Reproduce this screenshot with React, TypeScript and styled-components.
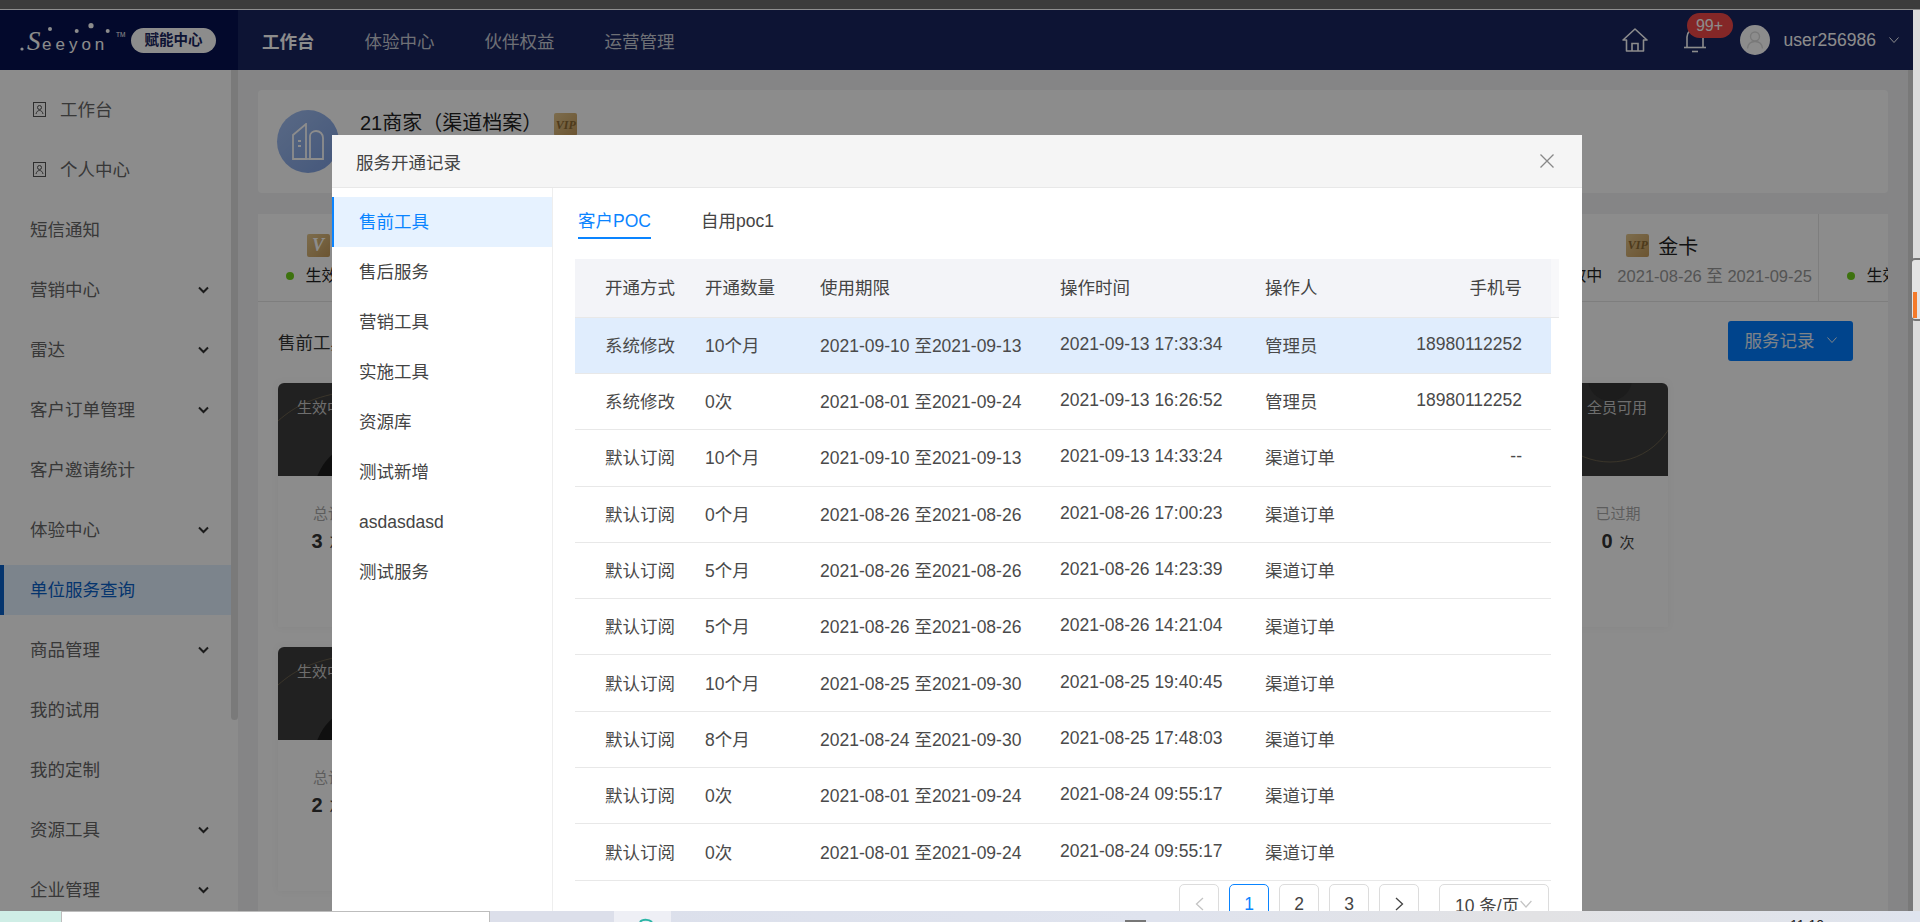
import React from "react";
import styled, { createGlobalStyle } from "styled-components";

const GlobalStyle = createGlobalStyle`
  html, body {
    margin: 0;
    padding: 0;
    background: #fff;
  }
  * {
    box-sizing: border-box;
  }
  body {
    font-family: "Liberation Sans", "Noto Sans CJK SC", sans-serif;
    font-size: 17.5px;
    color: #333;
  }
`;

const Screen = styled.div`
  width: 1920px;
  height: 922px;
  display: flex;
  flex-direction: column;
  overflow: hidden;
`;

const TitleStrip = styled.div`
  height: 10px;
  flex: none;
  background: #3c3c3c;
  border-bottom: 1px solid #8f8f8f;
`;

const Shell = styled.div`
  flex: 1;
  min-height: 0;
  display: flex;
`;

const Page = styled.div`
  position: relative;
  flex: 1;
  min-width: 0;
  display: flex;
  flex-direction: column;
  overflow: hidden;
`;

const WindowScroll = styled.div`
  position: relative;
  width: 7px;
  flex: none;
  background: #dcdcdc;
`;

const ScrollThumb = styled.div`
  position: absolute;
  top: 248px;
  left: -3px;
  width: 10px;
  height: 63px;
  border: 2px solid #777;
  border-right: 0;
  border-radius: 5px 0 0 5px;
  background: #e4e4e4;
  padding: 32px 3px 1px 1px;
`;

const ScrollMark = styled.div`
  height: 100%;
  background: #f47a2a;
`;

const Header = styled.header`
  height: 60px;
  flex: none;
  display: flex;
  align-items: center;
  background: #182560;
  color: #fff;
`;

const Brand = styled.div`
  width: 238px;
  height: 100%;
  flex: none;
  display: flex;
  align-items: center;
  gap: 4px;
  padding-left: 19px;
  background: #061250;
`;

const BrandPill = styled.span`
  display: block;
  width: 85px;
  height: 25px;
  line-height: 25px;
  text-align: center;
  border-radius: 13px;
  background: #fff;
  color: #182560;
  font-size: 14.5px;
  font-weight: 700;
`;

const TopNav = styled.nav`
  display: flex;
  gap: 50px;
  padding-left: 24px;
`;

const TopLink = styled.a<{ $active?: boolean }>`
  color: ${(p) => (p.$active ? "#fff" : "#c9ccd6")};
  font-weight: ${(p) => (p.$active ? 700 : 400)};
`;

const HeaderRight = styled.div`
  margin-left: auto;
  display: flex;
  align-items: center;
  padding-right: 14px;
`;

const BellBox = styled.div`
  position: relative;
  width: 24px;
  height: 26px;
  margin-left: 35px;
  margin-right: 33px;
`;

const Badge = styled.span`
  position: absolute;
  top: -14px;
  left: 4px;
  width: 46px;
  height: 25px;
  line-height: 25px;
  text-align: center;
  border-radius: 13px;
  background: #f04848;
  color: #fff;
  font-size: 16px;
`;

const Avatar = styled.div`
  width: 30px;
  height: 30px;
  border-radius: 50%;
  background: #fff;
  display: flex;
  align-items: center;
  justify-content: center;
`;

const UserName = styled.span`
  margin-left: 14px;
  margin-right: 13px;
  color: #fff;
`;

const Body = styled.div`
  flex: 1;
  min-height: 0;
  display: flex;
  background: #f2f3f5;
`;

const Sidebar = styled.aside`
  position: relative;
  width: 238px;
  flex: none;
  padding: 15px 7px 0 0;
  background: #fff;
  overflow: hidden;
`;

const SideThumb = styled.div`
  position: absolute;
  top: 0;
  right: 0;
  width: 7px;
  height: 650px;
  border-radius: 0 0 4px 4px;
  background: #dedede;
`;

const SideItem = styled.div<{ $active?: boolean }>`
  height: 50px;
  margin-bottom: 10px;
  display: flex;
  align-items: center;
  gap: 14px;
  padding: 0 22px 4px 30px;
  color: ${(p) => (p.$active ? "#0a62c9" : "#666")};
  background: ${(p) => (p.$active ? "#e2f0ff" : "transparent")};
  box-shadow: ${(p) => (p.$active ? "inset 4px 0 0 #0a62c9, inset 1px 0 0 #fff" : "none")};
`;

const SideArrow = styled.svg`
  margin-left: auto;
  margin-top: 3px;
`;

const SideIcon = styled.svg`
  margin-left: 3px;
  margin-top: 3px;
  flex: none;
`;

const Main = styled.main`
  flex: 1;
  min-width: 0;
  display: flex;
`;

const Content = styled.div`
  flex: 1;
  min-width: 0;
  padding: 20px 20px 0;
  display: flex;
  flex-direction: column;
  gap: 21px;
`;

const MainScroll = styled.div`
  width: 5px;
  flex: none;
  background: #dcdcdc;
`;

const ProfileCard = styled.section`
  height: 103px;
  flex: none;
  display: flex;
  padding: 20px 19px;
  gap: 21px;
  background: #fff;
  border-radius: 4px;
`;

const ProfileIcon = styled.div`
  width: 62px;
  height: 63px;
  border-radius: 50%;
  background: linear-gradient(135deg, #a3c0f2, #7d9fe0);
  display: flex;
  align-items: center;
  justify-content: center;
`;

const ProfileName = styled.h2`
  margin: 0;
  display: flex;
  align-items: flex-start;
  gap: 12px;
  font-size: 20px;
  line-height: 26px;
  font-weight: 400;
  color: #222;
`;

const ProfileVip = styled.span`
  display: flex;
  margin-top: 3px;
`;

const VipBadge = styled.span<{ $big?: boolean }>`
  display: flex;
  align-items: center;
  justify-content: center;
  width: 23px;
  height: 23px;
  flex: none;
  border-radius: 2px;
  background: linear-gradient(135deg, #e3c68d, #c49a5a);
  color: ${(p) => (p.$big ? "#fff" : "#8c6a33")};
  font-family: "Liberation Serif", serif;
  font-style: italic;
  font-size: ${(p) => (p.$big ? "18px" : "12px")};
  font-weight: 700;
`;

const Panel = styled.section`
  flex: 1;
  min-height: 0;
  background: #fff;
`;

const LevelStrip = styled.div`
  height: 88px;
  display: flex;
  overflow: hidden;
  border-bottom: 1px solid #e6e6e6;
`;

const LevelCell = styled.div`
  width: 312.2px;
  flex: none;
  display: flex;
  flex-direction: column;
  align-items: center;
  padding-top: 20px;
  border-right: 1px solid #e6e6e6;
`;

const LevelName = styled.div<{ $wide?: boolean }>`
  display: flex;
  align-items: center;
  gap: 9px;
  width: ${(p) => (p.$wide ? "214px" : "auto")};
  height: 23px;
  font-size: 20px;
  color: #222;
`;

const LevelMeta = styled.div`
  display: flex;
  align-items: center;
  width: 256px;
  margin-top: 9px;
  font-size: 16px;
  line-height: 20px;
  color: #222;
  white-space: nowrap;
`;

const Dot = styled.i`
  width: 8px;
  height: 8px;
  flex: none;
  margin-right: 12px;
  border-radius: 50%;
  background: #6fd01a;
`;

const LevelDate = styled.span`
  margin-left: 15px;
  font-size: 16.5px;
  color: #999;
`;

const SectionRow = styled.div`
  display: flex;
  justify-content: space-between;
  align-items: center;
  height: 40px;
  margin-top: 19px;
  padding: 0 35px 0 20px;
`;

const SectionTitle = styled.h3`
  margin: 0;
  font-size: 17.5px;
  font-weight: 400;
  color: #333;
`;

const RecordButton = styled.button`
  display: flex;
  align-items: center;
  justify-content: center;
  gap: 12px;
  width: 125px;
  height: 40px;
  padding: 0 0 3px;
  border: 0;
  border-radius: 3px;
  background: #007dff;
  color: #e6eef8;
  font: inherit;
`;

const CardGrid = styled.div`
  display: grid;
  grid-template-columns: repeat(3, 450px);
  gap: 20px;
  margin: 22px 0 0 20px;
`;

const ServiceCard = styled.article`
  height: 244px;
  background: #fff;
  box-shadow: 0 0 8px rgba(0, 0, 0, 0.05);
`;

const CardBanner = styled.div`
  position: relative;
  height: 93px;
  border-radius: 6px 6px 0 0;
  background: #3d3d3d;
  overflow: hidden;
`;

const BannerArt = styled.svg`
  position: absolute;
  inset: 0;
`;

const BannerRow = styled.div`
  position: relative;
  display: flex;
  justify-content: space-between;
  padding: 13px 21px 0 19px;
  font-size: 15px;
  color: #c8c8c8;
`;

const StatRow = styled.div`
  display: flex;
  justify-content: space-between;
  padding-top: 26px;
`;

const Stat = styled.div`
  width: 100px;
  text-align: center;
  font-size: 15px;
  color: #aaa;
`;

const StatValue = styled.div`
  margin-top: 7px;
  color: #444;
  font-size: 15px;
`;

const StatNumber = styled.b`
  margin-right: 7px;
  font-size: 20px;
  color: #333;
`;

const Mask = styled.div`
  position: absolute;
  inset: 0;
  background: rgba(0, 0, 0, 0.45);
`;

const Modal = styled.div`
  position: absolute;
  top: 125px;
  left: 332px;
  width: 1250px;
  height: 800px;
  display: flex;
  flex-direction: column;
  border-radius: 4px 4px 0 0;
  background: #fff;
`;

const ModalHead = styled.div`
  height: 53px;
  flex: none;
  display: flex;
  align-items: center;
  justify-content: space-between;
  padding: 0 28px 0 24px;
  background: #f5f5f5;
  border-bottom: 1px solid #e8e8e8;
  color: #444;
`;

const ModalBody = styled.div`
  flex: 1;
  display: flex;
  min-height: 0;
`;

const ModalMenu = styled.ul`
  width: 221px;
  flex: none;
  list-style: none;
  margin: 0;
  padding: 9px 0 0;
  border-right: 1px solid #eee;
`;

const MenuItem = styled.li<{ $active?: boolean }>`
  height: 50px;
  line-height: 50px;
  padding-left: 25px;
  color: ${(p) => (p.$active ? "#0a84ff" : "#444")};
  background: ${(p) => (p.$active ? "#e6f2ff" : "transparent")};
  border-left: ${(p) => (p.$active ? "2px solid #0a84ff" : "2px solid transparent")};
`;

const RecordPane = styled.div`
  flex: 1;
  min-width: 0;
  padding-left: 22px;
`;

const TabRow = styled.div`
  display: flex;
  gap: 50px;
  margin: 0 0 20px 3px;
  padding-top: 20px;
`;

const Tab = styled.div<{ $active?: boolean }>`
  height: 31px;
  line-height: 26px;
  color: ${(p) => (p.$active ? "#0a84ff" : "#444")};
  border-bottom: 2px solid ${(p) => (p.$active ? "#0a84ff" : "transparent")};
`;

const HeadWrap = styled.div`
  display: flex;
  width: 984px;
  background: #f8f8fa;
  border-bottom: 1px solid #e8e8e8;
`;

const cols = "100px 115px 240px 205px 136px 121px";

const HeadRow = styled.div`
  width: 976px;
  height: 57.7px;
  display: grid;
  grid-template-columns: ${cols};
  align-items: center;
  padding: 0 29px 2px 30px;
  background: #f3f4f8;
  color: #444;
`;

const DataRow = styled.div<{ $selected?: boolean }>`
  width: 976px;
  height: 56.3px;
  display: grid;
  grid-template-columns: ${cols};
  align-items: center;
  padding: 0 29px 2px 30px;
  border-bottom: 1px solid #e8e8e8;
  background: ${(p) => (p.$selected ? "#e0edfd" : "#fff")};
  color: #4a4a4a;
`;

const PhoneCell = styled.span`
  text-align: right;
`;

const Pager = styled.div`
  display: flex;
  justify-content: flex-end;
  gap: 10px;
  width: 974px;
  padding-top: 3.5px;
`;

const PageButton = styled.div<{ $active?: boolean }>`
  width: 40px;
  height: 40px;
  text-align: center;
  border-radius: 5px;
  border: 1px solid ${(p) => (p.$active ? "#0a84ff" : "#dcdcdc")};
  color: ${(p) => (p.$active ? "#0a84ff" : "#444")};
  display: flex;
  align-items: center;
  justify-content: center;
`;

const PageSize = styled.div`
  width: 110px;
  height: 40px;
  margin-left: 10px;
  display: flex;
  align-items: center;
  gap: 1px;
  padding-left: 15px;
  border-radius: 5px;
  border: 1px solid #dcdcdc;
  color: #444;
`;

const Taskbar = styled.div`
  height: 11px;
  flex: none;
  display: flex;
  overflow: hidden;
  background: linear-gradient(90deg, #d8dce8, #dfe3ee 60%, #e2e2e4 80%, #dfe4ee);
`;

const TaskSlot = styled.div<{ $w: number; $bg: string; $line?: boolean }>`
  width: ${(p) => p.$w}px;
  flex: none;
  background: ${(p) => p.$bg};
  border-top: ${(p) => (p.$line ? "1px solid #bdbdbd" : "0")};
  border-left: ${(p) => (p.$line ? "1px solid #bdbdbd" : "0")};
  border-right: ${(p) => (p.$line ? "1px solid #bdbdbd" : "0")};
  display: flex;
  justify-content: center;
  padding-left: 6px;
`;

const TaskSquare = styled.div`
  width: 21px;
  height: 2px;
  margin: 9px 0 0 454px;
  background: #777;
`;

const Clock = styled.div`
  margin-left: auto;
  margin-right: 96px;
  padding-top: 6px;
  font-size: 14px;
  line-height: 16px;
  color: #222;
`;

const Chevron = ({ size = 10, color = "currentColor", width = 1 }: { size?: number; color?: string; width?: number }) => (
  <svg width={size} height={size} viewBox="0 0 10 10" fill="none" stroke={color} strokeWidth={width}>
    <path d="M0.5 2.5 L5 7.5 L9.5 2.5" />
  </svg>
);

const Logo = () => (
  <svg width="108" height="40" viewBox="0 0 108 40" fill="none">
    <circle cx="31" cy="9" r="2" fill="#fff" />
    <circle cx="57.7" cy="11" r="2" fill="#fff" />
    <circle cx="72" cy="5.7" r="2.6" fill="#fff" />
    <circle cx="88.7" cy="11" r="2" fill="#fff" />
    <circle cx="3" cy="29" r="1.6" fill="#fff" />
    <text x="8" y="30" fontFamily="Liberation Serif" fontStyle="italic" fontSize="27" fill="#fff">S</text>
    <text x="23" y="30" fontFamily="Liberation Sans" fontSize="17" letterSpacing="4" fill="#fff">eeyon</text>
    <text x="97" y="17" fontFamily="Liberation Sans" fontSize="6.5" fill="#fff">TM</text>
  </svg>
);

const HomeIcon = () => (
  <svg width="26" height="26" viewBox="0 0 26 26" fill="none" stroke="#fff" strokeWidth="1.6">
    <path d="M1 13 L13 2 L25 13 L21.5 13 L21.5 24 L4.5 24 L4.5 13 Z" strokeLinejoin="round" />
    <path d="M10 24 L10 16.5 L16 16.5 L16 24" />
  </svg>
);

const BellIcon = () => (
  <svg width="24" height="26" viewBox="0 0 24 26" fill="none" stroke="#fff" strokeWidth="1.6">
    <path d="M4 20 L4 10 C4 5 8 2 12 2 C16 2 20 5 20 10 L20 20" />
    <path d="M1 20.5 L23 20.5" />
    <path d="M9 24.5 L15 24.5" />
  </svg>
);

const UserIcon = () => (
  <svg width="20" height="20" viewBox="0 0 20 20" fill="none" stroke="#ddd" strokeWidth="1.4">
    <circle cx="10" cy="6.5" r="4.5" />
    <path d="M2.5 18.5 C3 13.5 6 11.5 10 11.5 C14 11.5 17 13.5 17.5 18.5" />
  </svg>
);

const CardIcon = () => (
  <SideIcon width="13" height="15" viewBox="0 0 13 15" fill="none" stroke="#555" strokeWidth="1">
    <rect x="0.5" y="0.5" width="12" height="14" />
    <circle cx="6.5" cy="5.5" r="2" />
    <path d="M3 12 C3.5 9.5 5 8.5 6.5 8.5 C8 8.5 9.5 9.5 10 12" />
  </SideIcon>
);

const BuildingIcon = () => (
  <svg width="32" height="38" viewBox="0 0 32 38" fill="none" stroke="#fff" strokeWidth="1.8">
    <path d="M1 36 L1 12 L14 1 L14 36 Z" />
    <path d="M18 36 L18 13 C18 10 21 8 24 8 C28 8 31 11 31 15 L31 36 Z" />
    <path d="M1 36 L31 36" />
    <path d="M6 18 L9 18 M6 23 L9 23" />
  </svg>
);

const CloseIcon = () => (
  <svg width="14" height="14" viewBox="0 0 14 14" fill="none" stroke="#888" strokeWidth="1.3">
    <path d="M0.5 0.5 L13.5 13.5 M13.5 0.5 L0.5 13.5" />
  </svg>
);

const PagerArrow = ({ dir, color }: { dir: "left" | "right"; color: string }) => (
  <svg width="9" height="14" viewBox="0 0 9 14" fill="none" stroke={color} strokeWidth="1.3">
    <path d={dir === "left" ? "M8 1 L1.5 7 L8 13" : "M1 1 L7.5 7 L1 13"} />
  </svg>
);

const sideItems = [
  { label: "工作台", icon: true },
  { label: "个人中心", icon: true },
  { label: "短信通知" },
  { label: "营销中心", arrow: true },
  { label: "雷达", arrow: true },
  { label: "客户订单管理", arrow: true },
  { label: "客户邀请统计" },
  { label: "体验中心", arrow: true },
  { label: "单位服务查询", active: true },
  { label: "商品管理", arrow: true },
  { label: "我的试用" },
  { label: "我的定制" },
  { label: "资源工具", arrow: true },
  { label: "企业管理", arrow: true },
];

const levels = [0, 1, 2, 3, 4, 5];

const menu = ["售前工具", "售后服务", "营销工具", "实施工具", "资源库", "测试新增", "asdasdasd", "测试服务"];

const rows = [
  ["系统修改", "10个月", "2021-09-10 至2021-09-13", "2021-09-13 17:33:34", "管理员", "18980112252"],
  ["系统修改", "0次", "2021-08-01 至2021-09-24", "2021-09-13 16:26:52", "管理员", "18980112252"],
  ["默认订阅", "10个月", "2021-09-10 至2021-09-13", "2021-09-13 14:33:24", "渠道订单", "--"],
  ["默认订阅", "0个月", "2021-08-26 至2021-08-26", "2021-08-26 17:00:23", "渠道订单", ""],
  ["默认订阅", "5个月", "2021-08-26 至2021-08-26", "2021-08-26 14:23:39", "渠道订单", ""],
  ["默认订阅", "5个月", "2021-08-26 至2021-08-26", "2021-08-26 14:21:04", "渠道订单", ""],
  ["默认订阅", "10个月", "2021-08-25 至2021-09-30", "2021-08-25 19:40:45", "渠道订单", ""],
  ["默认订阅", "8个月", "2021-08-24 至2021-09-30", "2021-08-25 17:48:03", "渠道订单", ""],
  ["默认订阅", "0次", "2021-08-01 至2021-09-24", "2021-08-24 09:55:17", "渠道订单", ""],
  ["默认订阅", "0次", "2021-08-01 至2021-09-24", "2021-08-24 09:55:17", "渠道订单", ""],
];

const Card = ({ status, right, stat, count }: { status: string; right: string; stat: string; count: string }) => (
  <ServiceCard>
    <CardBanner>
      <BannerArt width="450" height="93" viewBox="0 0 450 93" fill="none">
        <path d="M0 38 C18 22 36 14 70 8" stroke="#8a7a58" strokeOpacity="0.6" />
        <circle cx="90" cy="112" r="54" fill="#1c1c1c" />
        <circle cx="392" cy="10" r="69" stroke="#8a7a58" strokeOpacity="0.6" />
        <circle cx="392" cy="-4" r="22" fill="#333" />
      </BannerArt>
      <BannerRow>
        <span>{status}</span>
        <span>{right}</span>
      </BannerRow>
    </CardBanner>
    <StatRow>
      <Stat>
        总计
        <StatValue>
          <StatNumber>{count}</StatNumber>次
        </StatValue>
      </Stat>
      <Stat>
        {stat}
        <StatValue>
          <StatNumber>0</StatNumber>次
        </StatValue>
      </Stat>
    </StatRow>
  </ServiceCard>
);

const App = () => {
  return (
    <Screen>
      <GlobalStyle />
      <TitleStrip />
      <Shell>
        <Page>
          <Header>
            <Brand>
              <Logo />
              <BrandPill>赋能中心</BrandPill>
            </Brand>
            <TopNav>
              <TopLink $active>工作台</TopLink>
              <TopLink>体验中心</TopLink>
              <TopLink>伙伴权益</TopLink>
              <TopLink>运营管理</TopLink>
            </TopNav>
            <HeaderRight>
              <HomeIcon />
              <BellBox>
                <BellIcon />
                <Badge>99+</Badge>
              </BellBox>
              <Avatar>
                <UserIcon />
              </Avatar>
              <UserName>user256986</UserName>
              <Chevron />
            </HeaderRight>
          </Header>
          <Body>
            <Sidebar>
              {sideItems.map((item) => (
                <SideItem key={item.label} $active={item.active}>
                  {item.icon && <CardIcon />}
                  {item.label}
                  {item.arrow && (
                    <SideArrow width="11" height="8" viewBox="0 0 11 8" fill="none" stroke="#333" strokeWidth="2">
                      <path d="M1 1.5 L5.5 6 L10 1.5" />
                    </SideArrow>
                  )}
                </SideItem>
              ))}
              <SideThumb />
            </Sidebar>
            <Main>
              <Content>
                <ProfileCard>
                  <ProfileIcon>
                    <BuildingIcon />
                  </ProfileIcon>
                  <ProfileName>
                    21商家（渠道档案）
                    <ProfileVip>
                      <VipBadge>VIP</VipBadge>
                    </ProfileVip>
                  </ProfileName>
                </ProfileCard>
                <Panel>
                  <LevelStrip>
                    {levels.map((n) => (
                      <LevelCell key={n}>
                        <LevelName $wide={n === 0}>
                          <VipBadge $big={n === 0}>{n === 0 ? "V" : "VIP"}</VipBadge>
                          {n > 0 && "金卡"}
                        </LevelName>
                        <LevelMeta>
                          <Dot />
                          生效中
                          <LevelDate>2021-08-26 至 2021-09-25</LevelDate>
                        </LevelMeta>
                      </LevelCell>
                    ))}
                  </LevelStrip>
                  <SectionRow>
                    <SectionTitle>售前工具</SectionTitle>
                    <RecordButton>
                      服务记录
                      <Chevron />
                    </RecordButton>
                  </SectionRow>
                  <CardGrid>
                    <Card status="生效中" right="" stat="已用" count="3" />
                    <Card status="生效中" right="" stat="已用" count="3" />
                    <Card status="生效中" right="全员可用" stat="已过期" count="3" />
                    <Card status="生效中" right="" stat="已用" count="2" />
                  </CardGrid>
                </Panel>
              </Content>
              <MainScroll />
            </Main>
          </Body>
          <Mask />
          <Modal>
            <ModalHead>
              服务开通记录
              <CloseIcon />
            </ModalHead>
            <ModalBody>
              <ModalMenu>
                {menu.map((m, i) => (
                  <MenuItem key={m} $active={i === 0}>
                    {m}
                  </MenuItem>
                ))}
              </ModalMenu>
              <RecordPane>
                <TabRow>
                  <Tab $active>客户POC</Tab>
                  <Tab>自用poc1</Tab>
                </TabRow>
                <HeadWrap>
                  <HeadRow>
                    <span>开通方式</span>
                    <span>开通数量</span>
                    <span>使用期限</span>
                    <span>操作时间</span>
                    <span>操作人</span>
                    <PhoneCell>手机号</PhoneCell>
                  </HeadRow>
                </HeadWrap>
                {rows.map((r, i) => (
                  <DataRow key={i} $selected={i === 0}>
                    <span>{r[0]}</span>
                    <span>{r[1]}</span>
                    <span>{r[2]}</span>
                    <span>{r[3]}</span>
                    <span>{r[4]}</span>
                    <PhoneCell>{r[5]}</PhoneCell>
                  </DataRow>
                ))}
                <Pager>
                  <PageButton>
                    <PagerArrow dir="left" color="#c4c4c4" />
                  </PageButton>
                  <PageButton $active>1</PageButton>
                  <PageButton>2</PageButton>
                  <PageButton>3</PageButton>
                  <PageButton>
                    <PagerArrow dir="right" color="#444" />
                  </PageButton>
                  <PageSize>
                    10 条/页
                    <Chevron size={12} color="#c4c4c4" />
                  </PageSize>
                </Pager>
              </RecordPane>
            </ModalBody>
          </Modal>
        </Page>
        <WindowScroll>
          <ScrollThumb>
            <ScrollMark />
          </ScrollThumb>
        </WindowScroll>
      </Shell>
      <Taskbar>
        <TaskSlot $w={61} $bg="#cfeee6" />
        <TaskSlot $w={429} $bg="#fff" $line />
        <TaskSlot $w={124} $bg="#dcdfea" />
        <TaskSlot $w={57} $bg="#eeeff5">
          <svg width="14" height="11" viewBox="0 0 14 11" fill="none" stroke="#2bb5a6" strokeWidth="2">
            <path d="M1 11 C3 8 10 8 13 11" />
          </svg>
        </TaskSlot>
        <TaskSquare />
        <Clock>11:10</Clock>
      </Taskbar>
    </Screen>
  );
};

export default App;
